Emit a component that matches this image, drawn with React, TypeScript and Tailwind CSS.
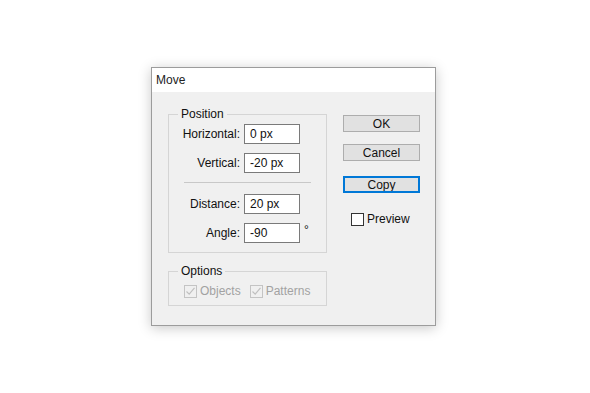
import React from "react";

const font = { fontFamily: '"Liberation Sans", Arial, sans-serif' };

function Field({ label, value, suffix }: { label: string; value: string; suffix?: string }) {
  return (
    <div className="flex items-center h-[19px]">
      <span className="w-[75px] text-right pr-[4px] text-[12px] text-[#111]">{label}</span>
      <div className="w-[56px] h-[20px] border border-[#7a7a7a] bg-white flex items-center pl-[5px] text-[12px] text-[#111]">
        {value}
      </div>
      {suffix && <span className="ml-[4px] -mt-[6px] text-[12px] text-[#111]">{suffix}</span>}
    </div>
  );
}

function Check({ label, disabled, checked }: { label: string; disabled?: boolean; checked?: boolean }) {
  return (
    <div className="flex items-center gap-[3px]">
      <div
        className={
          "w-[13px] h-[13px] border flex items-center justify-center " +
          (disabled ? "border-[#c4c4c4] bg-[#f0f0f0]" : "border-[#333] bg-white")
        }
      >
        {checked && (
          <svg width="11" height="11" viewBox="0 0 11 11">
            <path d="M1.5 5.5 L4.2 8.2 L9.5 1.8" fill="none" stroke={disabled ? "#c0c0c0" : "#333"} strokeWidth="1.2" />
          </svg>
        )}
      </div>
      <span className={"text-[12px] " + (disabled ? "text-[#a2a2a2]" : "text-[#111]")}>{label}</span>
    </div>
  );
}

function Btn({ label, focused }: { label: string; focused?: boolean }) {
  return (
    <div
      className={
        "w-[77px] h-[17px] flex items-center justify-center bg-[#e1e1e1] text-[12px] text-[#111] border " +
        (focused ? "border-[#0078d7] outline outline-1 -outline-offset-2 outline-[#0078d7]" : "border-[#adadad]")
      }
    >
      {label}
    </div>
  );
}

export default function App() {
  return (
    <div className="w-[590px] h-[393px] bg-white pt-[67px] pl-[151px]" style={font}>
      <div className="w-[285px] h-[259px] bg-[#f0f0f0] border border-[#9c9c9c] shadow-[0_2px_12px_rgba(0,0,0,0.22)] flex flex-col">
        <div className="h-[24px] bg-white flex items-center pl-[4px] text-[12px] text-[#222]">Move</div>
        <div className="flex pl-[16px] pt-[14px]">
          <div className="flex flex-col">
            <fieldset className="w-[159px] border border-[#d5d5d5] pl-[0px] pb-[10px]">
              <legend className="ml-[9px] px-[3px] text-[12px] text-[#111] leading-[16px]">Position</legend>
              <div className="flex flex-col pt-[2px] gap-[10px]">
                <Field label="Horizontal:" value="0 px" />
                <Field label="Vertical:" value="-20 px" />
              </div>
              <div className="ml-[15px] w-[127px] h-px bg-[#c8c8c8] mt-[10px] mb-[11px]" />
              <div className="flex flex-col gap-[10px]">
                <Field label="Distance:" value="20 px" />
                <Field label="Angle:" value="-90" suffix="°" />
              </div>
            </fieldset>
            <fieldset className="w-[159px] h-[43px] mt-[10px] border border-[#d5d5d5]">
              <legend className="ml-[9px] px-[3px] text-[12px] text-[#111] leading-[16px]">Options</legend>
              <div className="flex items-center gap-[9px] pl-[15px] pt-[3px]">
                <Check label="Objects" disabled checked />
                <Check label="Patterns" disabled checked />
              </div>
            </fieldset>
          </div>
          <div className="flex flex-col ml-[16px] pt-[9px]">
            <Btn label="OK" />
            <div className="h-[12px]" />
            <Btn label="Cancel" />
            <div className="h-[15px]" />
            <Btn label="Copy" focused />
            <div className="h-[17px] " />
            <div className="pl-[8px]">
              <Check label="Preview" />
            </div>
          </div>
        </div>
      </div>
    </div>
  );
}
